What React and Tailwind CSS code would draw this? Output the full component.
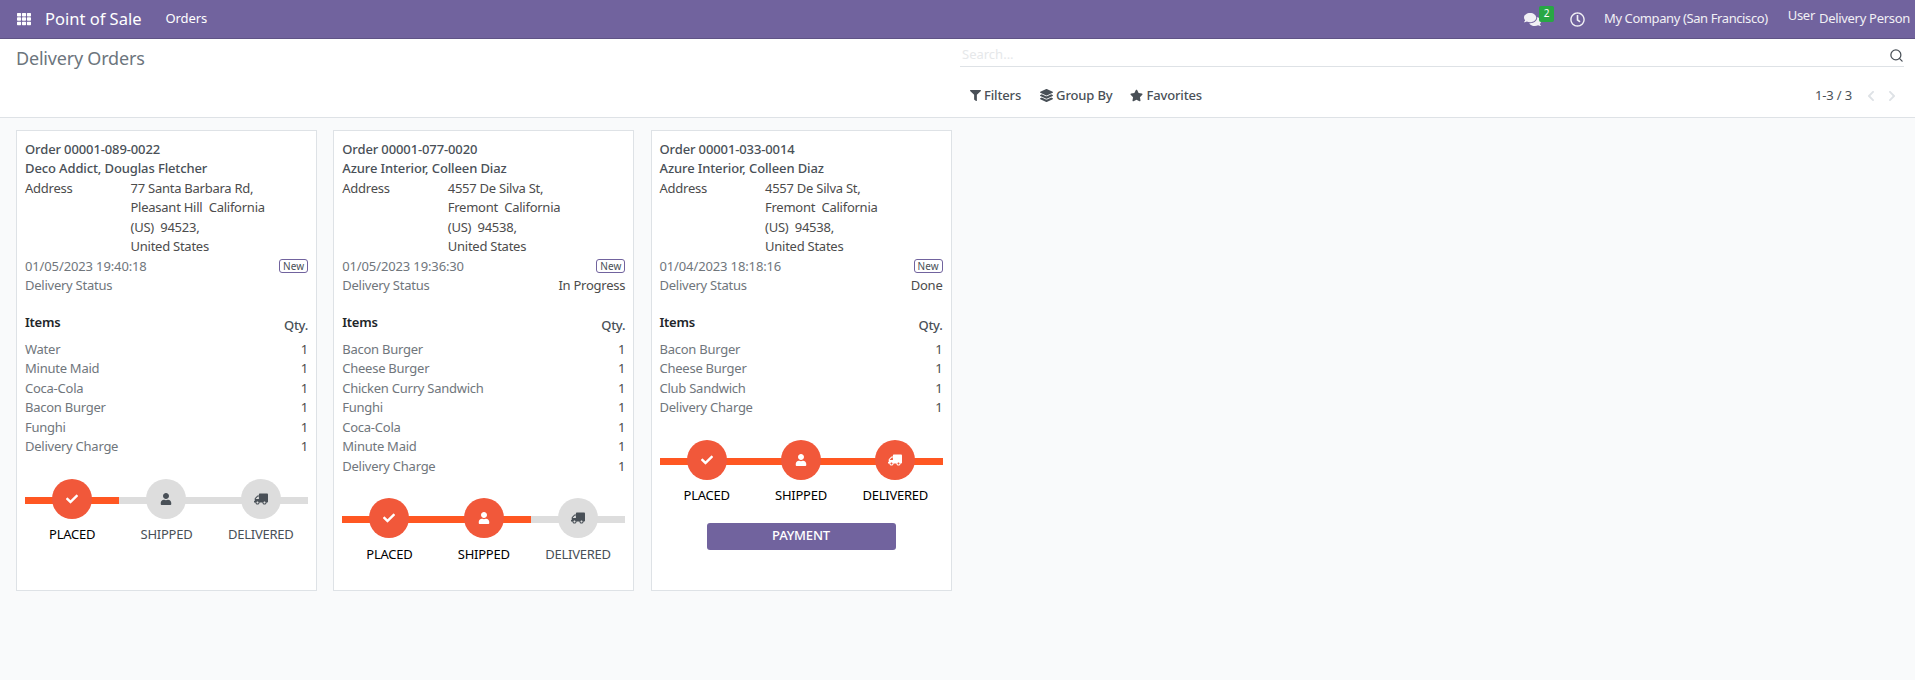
import { FaTh, FaComments, FaRegClock, FaFilter, FaLayerGroup, FaStar, FaChevronLeft, FaChevronRight, FaCheck, FaUser, FaTruck } from "react-icons/fa";
import { Search } from "lucide-react";

const orders = [
  {
    name: "Order 00001-089-0022",
    customer: "Deco Addict, Douglas Fletcher",
    address: ["77 Santa Barbara Rd,", "Pleasant Hill  California", "(US)  94523,", "United States"],
    date: "01/05/2023 19:40:18",
    status: "",
    items: ["Water", "Minute Maid", "Coca-Cola", "Bacon Burger", "Funghi", "Delivery Charge"],
    done: 1,
  },
  {
    name: "Order 00001-077-0020",
    customer: "Azure Interior, Colleen Diaz",
    address: ["4557 De Silva St,", "Fremont  California", "(US)  94538,", "United States"],
    date: "01/05/2023 19:36:30",
    status: "In Progress",
    items: ["Bacon Burger", "Cheese Burger", "Chicken Curry Sandwich", "Funghi", "Coca-Cola", "Minute Maid", "Delivery Charge"],
    done: 2,
  },
  {
    name: "Order 00001-033-0014",
    customer: "Azure Interior, Colleen Diaz",
    address: ["4557 De Silva St,", "Fremont  California", "(US)  94538,", "United States"],
    date: "01/04/2023 18:18:16",
    status: "Done",
    items: ["Bacon Burger", "Cheese Burger", "Club Sandwich", "Delivery Charge"],
    done: 3,
    payment: true,
  },
];

const steps = [
  { label: "PLACED", Icon: FaCheck, size: 12, flip: "" },
  { label: "SHIPPED", Icon: FaUser, size: 12, flip: "" },
  { label: "DELIVERED", Icon: FaTruck, size: 14, flip: "-scale-x-100" },
];

const tracks = {
  1: "bg-[linear-gradient(to_right,#ff5722_33.33%,#dddddd_33.33%)]",
  2: "bg-[linear-gradient(to_right,#ff5722_66.66%,#dddddd_66.66%)]",
  3: "bg-[linear-gradient(#ff5722,#ff5722)]",
};

const Stepper = ({ done }) => (
  <div className={`mt-[22px] flex bg-[length:100%_7px] bg-[position:0_18px] bg-no-repeat ${tracks[done]}`}>
    {steps.map(({ label, Icon, size, flip }, i) => {
      const on = i < done;
      return (
        <div key={label} className="flex flex-1 flex-col items-center">
          <div className={`flex h-10 w-10 items-center justify-center rounded-full ${on ? "bg-[#f1583a] text-white" : "bg-[#dddddd] text-[#495057]"}`}>
            <Icon size={size} className={flip} />
          </div>
          <div className={`mt-[6.5px] text-[13px] leading-[19.5px] tracking-[-0.25px] ${on ? "text-black" : "text-[#495057]"}`}>{label}</div>
        </div>
      );
    })}
  </div>
);

const OrderCard = ({ order }) => (
  <div className="h-[461px] w-[301px] border border-[#dee2e6] bg-white px-2 pt-[8.5px] text-[13px] leading-[19.5px] tracking-[-0.25px] text-[#4c4c4c]">
    <div className="font-medium tracking-[-0.12px] text-[#495057]">{order.name}</div>
    <div className="font-medium tracking-[-0.12px] text-[#495057]">{order.customer}</div>
    <div className="flex text-[#4c4c4c]">
      <div className="w-[105.5px]">Address</div>
      <div className="whitespace-pre">
        {order.address.map((line) => (
          <div key={line}>{line}</div>
        ))}
      </div>
    </div>
    <div className="flex items-center justify-between text-[#70767c]">
      <span className="tracking-[-0.13px]">{order.date}</span>
      <span className="rounded-[3px] border border-[#71639e] px-[3px] text-[10px] leading-[12px] tracking-normal text-[#495057]">New</span>
    </div>
    <div className="flex justify-between">
      <span className="text-[#70767c]">Delivery Status</span>
      <span>{order.status}</span>
    </div>
    <div className="mt-[17px] flex justify-between">
      <span className="font-semibold text-[#212529]">Items</span>
      <span className="mt-[3px] font-medium text-[#495057]">Qty.</span>
    </div>
    <div className="mt-[4.5px]">
      {order.items.map((item) => (
        <div key={item} className="flex justify-between text-[#70767c]">
          <span>{item}</span>
          <span className="text-[#4c4c4c]">1</span>
        </div>
      ))}
    </div>
    <Stepper done={order.done} />
    {order.payment && (
      <div className="mt-[17px] flex justify-center">
        <button className="h-[27px] w-[189px] rounded-[3px] bg-[#71639e] text-[13px] font-medium tracking-[-0.2px] text-white">PAYMENT</button>
      </div>
    )}
  </div>
);

export default function App() {
  return (
    <div className="min-h-[680px] bg-[#f9fafb] font-['Noto_Sans',sans-serif] text-[13px]">
      {/* top navbar */}
      <div className="flex h-[39px] items-center border-b border-[#5f5385] bg-[#71639e] text-white">
        <FaTh size={14} className="ml-[17px]" />
        <span className="ml-[14px] text-[16.5px]">Point of Sale</span>
        <span className="ml-[24px] text-[13px] tracking-[-0.1px]">Orders</span>
        <div className="ml-auto flex items-center tracking-[-0.3px] text-[#f1f0f5]">
          <div className="relative mr-[29px]">
            <FaComments size={17} />
            <span className="absolute -top-[5px] left-[15px] flex h-4 w-[15px] items-center justify-center rounded-[2px] bg-[#28a745] text-[10px] text-white">2</span>
          </div>
          <FaRegClock size={15} className="mr-[19px]" />
          <span className="tracking-[-0.4px]">My Company (San Francisco)</span>
          <span className="ml-[20px] mb-[6px]">User</span>
          <span className="ml-[4px] mr-[5px]">Delivery Person</span>
        </div>
      </div>

      {/* control panel */}
      <div className="flex h-[79px] border-b border-[#dee2e6] bg-white">
        <div className="w-[960px] pl-4 pt-[6px] text-[18px] leading-[27px] tracking-[-0.2px] text-[#6c757d]">Delivery Orders</div>
        <div className="flex-1 pr-[11px]">
          <div className="flex h-[28px] items-center justify-between border-b border-[#dee2e6] pt-[5px]">
            <span className="pl-[2px] text-[#e6e8ea]">Search...</span>
            <Search size={15} strokeWidth={2} className="text-[#495057]" />
          </div>
          <div className="mt-[19px] flex items-center tracking-[-0.15px] text-[#495057]">
            <div className="ml-[10px] flex items-center gap-[3px] font-medium">
              <FaFilter size={11} />
              <span>Filters</span>
            </div>
            <div className="ml-[19px] flex items-center gap-[3px] font-medium">
              <FaLayerGroup size={13} />
              <span>Group By</span>
            </div>
            <div className="ml-[18px] flex items-center gap-[3px] font-medium">
              <FaStar size={13} />
              <span>Favorites</span>
            </div>
            <span className="ml-auto mr-[13px]">1-3 / 3</span>
            <FaChevronLeft size={12} className="mr-[9px] text-[#dee2e6]" />
            <FaChevronRight size={12} className="mr-[6px] text-[#dee2e6]" />
          </div>
        </div>
      </div>

      {/* order cards */}
      <div className="flex gap-[16.25px] pl-4 pt-[12px]">
        {orders.map((order) => (
          <OrderCard key={order.name} order={order} />
        ))}
      </div>
    </div>
  );
}
